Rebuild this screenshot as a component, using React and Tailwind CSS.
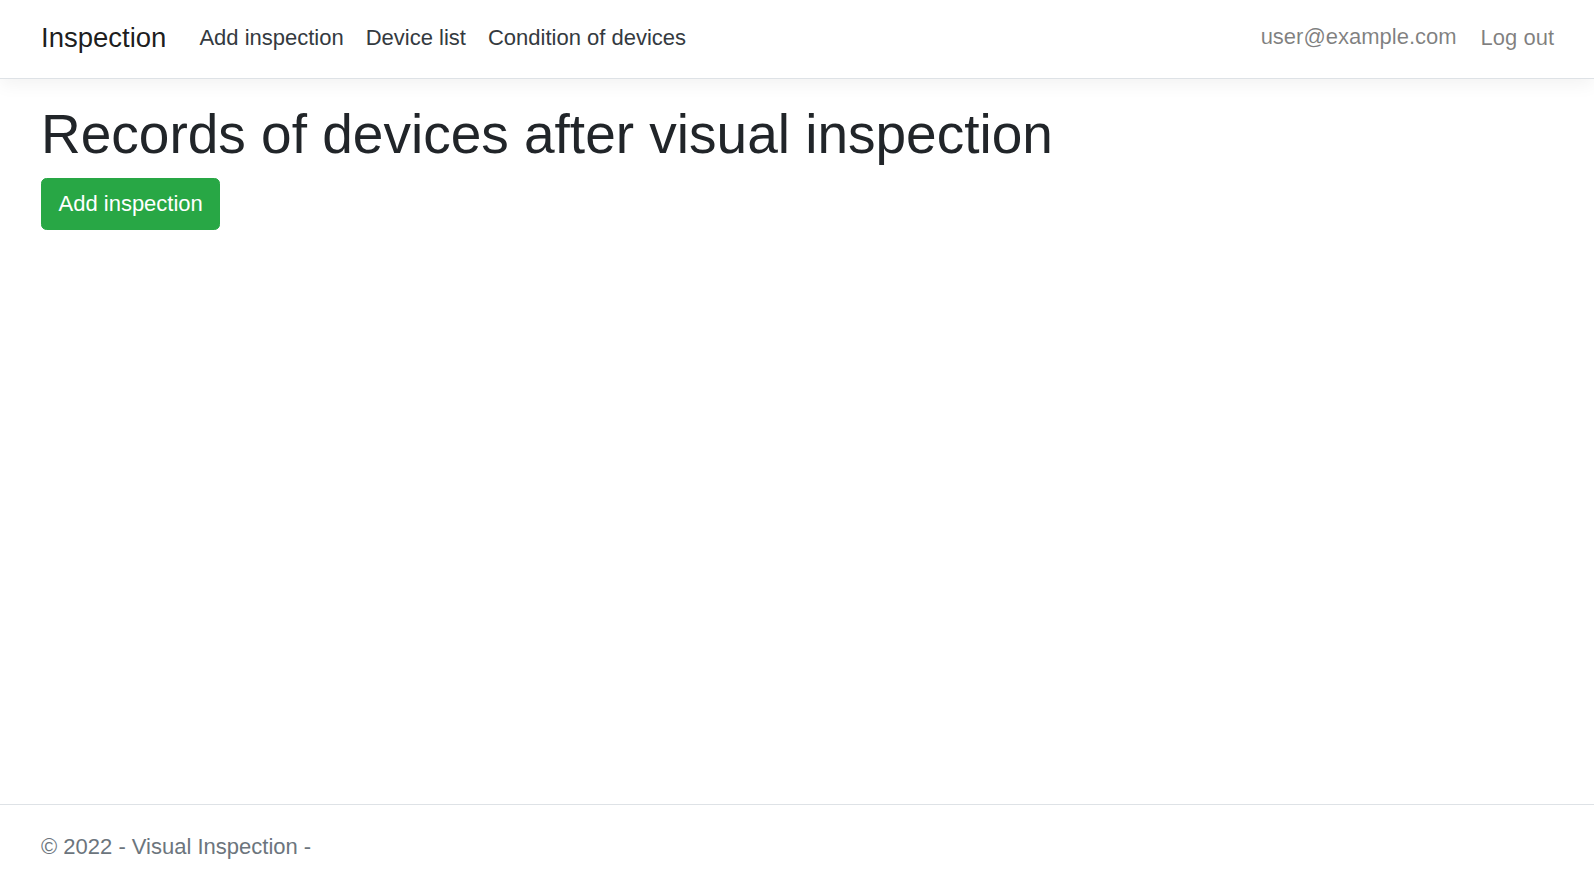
export default function App() {
  const font = { fontFamily: '"Liberation Sans", Arial, sans-serif' };
  return (
    <div className="h-screen flex flex-col bg-white text-[#212529] overflow-hidden" style={font}>
      <nav className="h-[79px] shrink-0 border-b border-[#dee2e6] bg-white shadow-[0_5.5px_16.5px_rgba(0,0,0,0.05)] flex items-center pb-[3px] pl-[41px] pr-[29px] relative z-10">
        <a className="text-[27.5px] leading-[41px] text-black/90 mr-[22px]">Inspection</a>
        <ul className="flex items-center">
          <li><a className="block px-[11px] text-[22px] leading-[33px] text-[#343a40]">Add inspection</a></li>
          <li><a className="block px-[11px] text-[22px] leading-[33px] text-[#343a40]">Device list</a></li>
          <li><a className="block px-[11px] text-[22px] leading-[33px] text-[#343a40]">Condition of devices</a></li>
        </ul>
        <ul className="ml-auto flex items-center gap-[2px]">
          <li><span className="block px-[11px] text-[22px] leading-[33px] text-black/50 -mt-[2px]">user@example.com</span></li>
          <li><a className="block px-[11px] text-[22px] leading-[33px] text-black/50">Log out</a></li>
        </ul>
      </nav>
      <main className="flex-1 pl-[41px] pt-[22px]">
        <h1 className="text-[55px] leading-[66px] font-normal mb-[11px]">Records of devices after visual inspection</h1>
        <button className="bg-[#28a745] border border-[#28a745] text-white text-[22px] leading-[33px] px-[16.5px] py-[8.25px] rounded-[5.5px]">Add inspection</button>
      </main>
      <footer className="shrink-0 h-[77px] border-t border-[#dee2e6] overflow-hidden pl-[41px]">
        <div className="text-[22px] leading-[84px] text-[#6c757d] whitespace-nowrap">© 2022 - Visual Inspection -</div>
      </footer>
    </div>
  );
}
